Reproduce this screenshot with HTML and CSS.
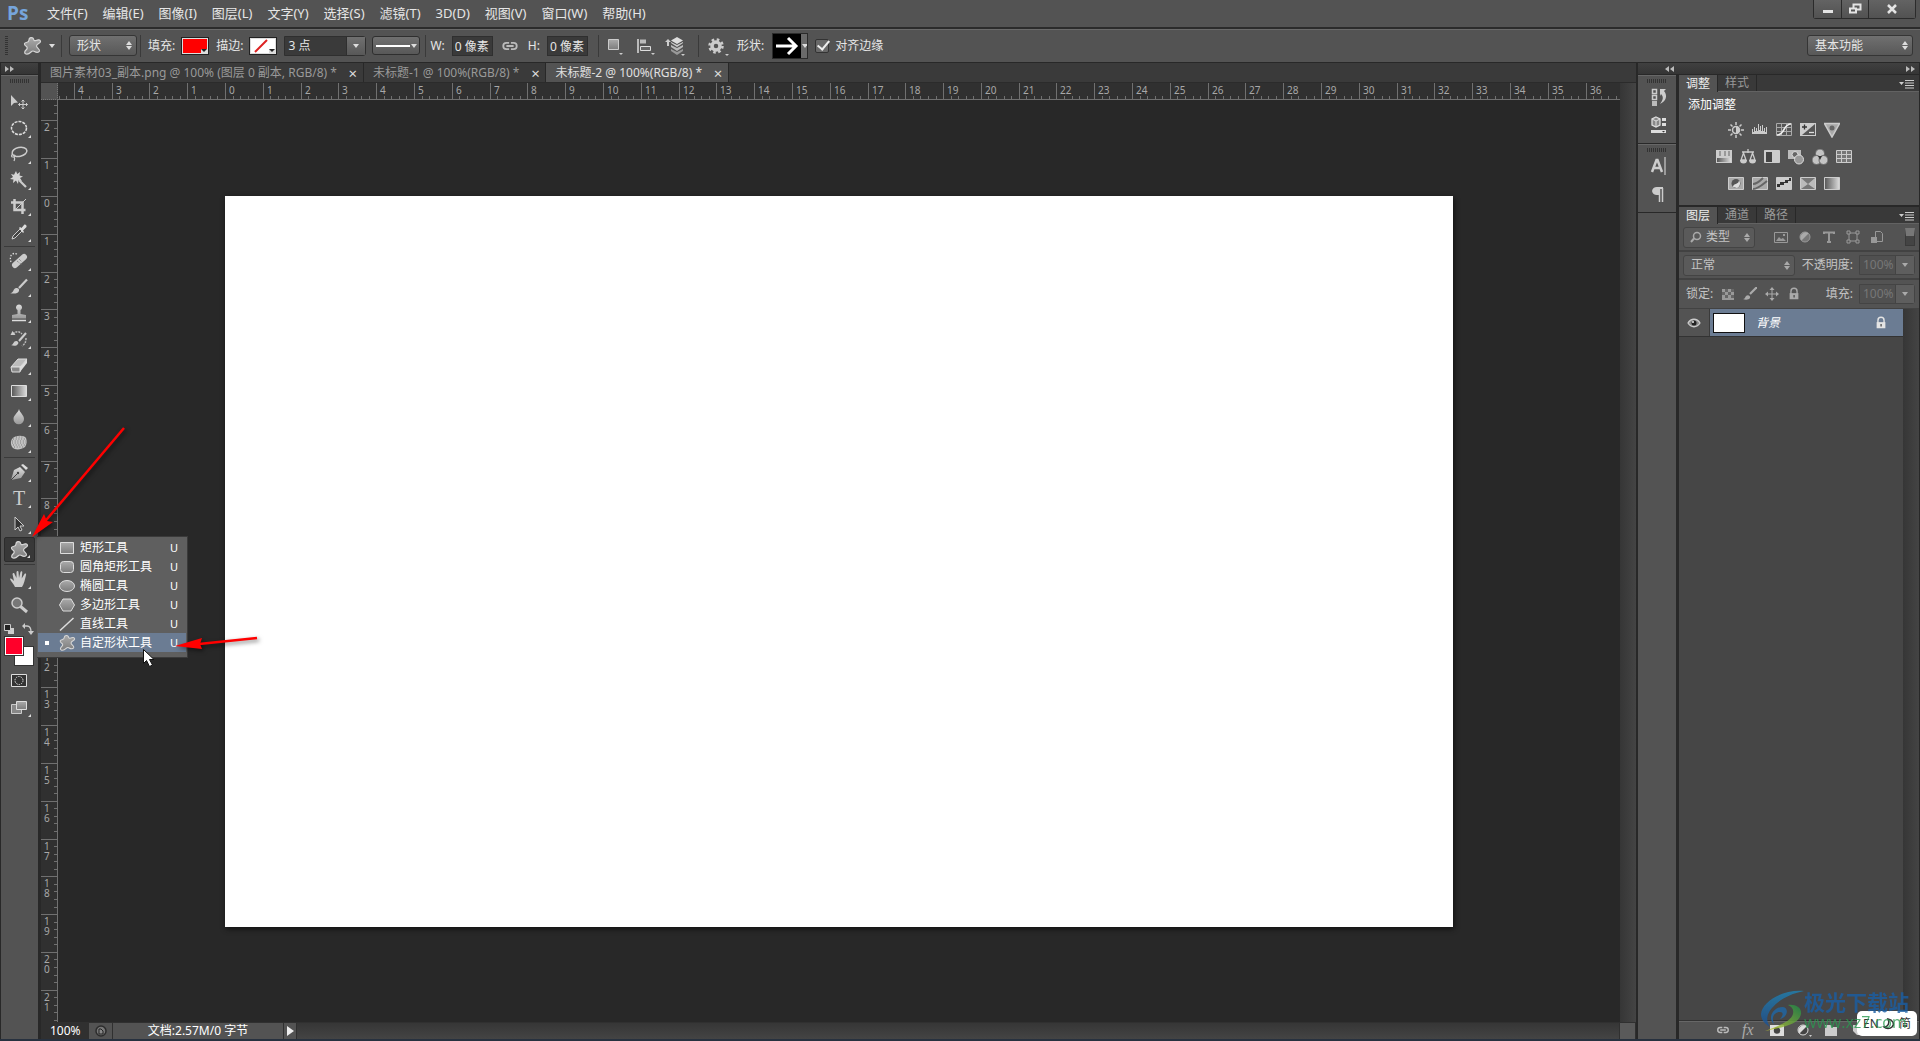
FILE: index.html
```html
<!DOCTYPE html>
<html lang="zh-CN">
<head>
<meta charset="utf-8">
<title>Ps</title>
<link rel="stylesheet" href="styles.css">
</head>
<body>
<svg class="defs" aria-hidden="true">
  <defs>
    <linearGradient id="g-face" x1="0" y1="0" x2="0" y2="1"><stop offset="0" stop-color="#ddd"/><stop offset="1" stop-color="#999"/></linearGradient>
    <linearGradient id="g-gray" x1="0" y1="0" x2="0" y2="1"><stop offset="0" stop-color="#aaa"/><stop offset="1" stop-color="#7c7c7c"/></linearGradient>
    <linearGradient id="g-side" x1="0" y1="0" x2="1" y2="0"><stop offset="0" stop-color="#555"/><stop offset="1" stop-color="#ddd"/></linearGradient>
    <symbol id="i-blob" viewBox="0 0 20 20"><path d="M7 4c0-3 4-3 4.500-1 .3 1.500 1 2 2.500 1.500 2-1 4.500-1 4.500 1 0 2-4 2-4 4.500 0 2 3.500 3 3 5-1 2-3.500 1.500-5 .5-1.500-1-2.500-.5-3.500.5-1.500 1.500-3 2.500-5 2-2-.7-1.500-2.500 0-4 1.500-1.300 1.500-2.500.5-3.500-1.500-1-2.500-1.500-2-3C3.500 6 7 7 7 4z" fill="url(#g-gray)" stroke="#d6d6d6" stroke-width="1.200"/></symbol>
    <symbol id="i-link" viewBox="0 0 20 20"><path d="M9 6.500H6a3.500 3.500 0 0 0 0 7h3M11 6.500h3a3.500 3.500 0 0 1 0 7h-3M6 10h8" fill="none" stroke="#bbb" stroke-width="2"/></symbol>
    <symbol id="i-menu" viewBox="0 0 16 10"><path d="M0 3h5L2.500 6zM6 1h9v1H6zM6 3.500h9v1H6zM6 6h9v1H6zM6 8.500h9v1H6z" fill="#ccc"/></symbol>
    <symbol id="i-lock" viewBox="0 0 16 16"><path d="M4.500 8V5a3.500 3.500 0 0 1 7 0v3" fill="none" stroke="currentColor" stroke-width="1.600"/><path d="M3 7h10v7H3z" fill="currentColor"/><path d="M7.400 9h1.400v3H7.400z" fill="#444"/></symbol>
  </defs>
</svg>

<header class="menubar">
  <span class="logo">Ps</span>
  <nav class="menus">
    <a href="#">文件(F)</a><a href="#">编辑(E)</a><a href="#">图像(I)</a><a href="#">图层(L)</a><a href="#">文字(Y)</a><a href="#">选择(S)</a><a href="#">滤镜(T)</a><a href="#">3D(D)</a><a href="#">视图(V)</a><a href="#">窗口(W)</a><a href="#">帮助(H)</a>
  </nav>
  <div class="winbtns">
    <button aria-label="最小化"><svg width="12" height="12"><path d="M1 7h10v3H1z" fill="#e4e4e4"/></svg></button>
    <button aria-label="还原"><svg width="14" height="12"><path d="M5.500 1.500h7v5h-7z" fill="none" stroke="#e4e4e4" stroke-width="2"/><path d="M2 5.500h6v4H2z" fill="#555" stroke="#e4e4e4" stroke-width="2"/></svg></button>
    <button class="close" aria-label="关闭"><svg width="12" height="10"><path d="M2 1l8 8M10 1L2 9" stroke="#e4e4e4" stroke-width="2.500"/></svg></button>
  </div>
</header>

<div class="options">
  <span class="vgrip"></span>
  <button class="plain preset" aria-label="自定形状"><svg width="20" height="20"><use href="#i-blob"/></svg><i class="caret"></i></button>
  <i class="vsep"></i>
  <span class="sel mode"><select aria-label="模式"><option>形状</option></select></span>
  <i class="vsep"></i>
  <span class="lab">填充:</span><button class="swatch red" aria-label="填充颜色"></button>
  <span class="lab">描边:</span><button class="swatch none" aria-label="描边颜色"><svg width="24" height="15"><path d="M5 14L17 2" stroke="#d22" stroke-width="2"/></svg></button>
  <span class="combo stroke"><input aria-label="描边宽度" value="3 点"><button aria-label="选择宽度"><i class="caret"></i></button></span>
  <button class="linetype" aria-label="线型"><i class="rule"></i><i class="caret"></i></button>
  <i class="vsep tight"></i>
  <label class="num">W:<input value="0 像素"></label>
  <button class="plain" aria-label="链接"><svg width="18" height="18"><use href="#i-link"/></svg></button>
  <label class="num">H:<input value="0 像素"></label>
  <i class="vsep late"></i>
  <button class="plain op" aria-label="路径操作"><svg width="22" height="22"><path d="M4.500 4.500h10v10h-10z" fill="url(#g-gray)" stroke="#ccc"/><path d="M15 18h4l-2 2z" fill="#ccc"/></svg></button>
  <button class="plain op" aria-label="路径对齐"><svg width="22" height="22"><path d="M4 4v14" stroke="#ddd" stroke-width="1.500"/><path d="M6 4.500h6v4H6z" fill="#bbb"/><path d="M6.500 11.500h10v4h-10z" fill="#666" stroke="#ddd"/><path d="M17 18h4l-2 2z" fill="#ccc"/></svg></button>
  <button class="plain op" aria-label="路径排列"><svg width="22" height="22"><path d="M1 7l3-3 3 3H5v4H3V7z" fill="#ccc"/><path d="M7 14l6 3 6-3v2l-6 4-6-4z" fill="#999"/><path d="M7 10l6 3 6-3v2l-6 4-6-4z" fill="#bbb"/><path d="M13 2l6 3.500-6 3.500-6-3.500z" fill="#ddd"/><path d="M7 7l6 3 6-3v1l-6 4-6-4zM17 19h4l-2 2z" fill="#ccc"/></svg></button>
  <i class="vsep wide"></i>
  <button class="plain gear" aria-label="设置"><svg width="22" height="22"><circle cx="9" cy="11" r="6.500" fill="none" stroke="#ccc" stroke-width="2.500" stroke-dasharray="2.550 2.550"/><circle cx="9" cy="11" r="4" fill="none" stroke="#ccc" stroke-width="3.500"/><path d="M18 19h4l-2 2z" fill="#ccc"/></svg></button>
  <span class="lab">形状:</span>
  <button class="shape" aria-label="形状"><svg width="28" height="24"><path d="M0 0h28v24H0z" fill="#000"/><path d="M3 12h19M15 4l8 8-8 8" fill="none" stroke="#fff" stroke-width="3"/></svg><i class="caret"></i></button>
  <label class="check"><input type="checkbox" checked>对齐边缘</label>
  <span class="sel workspace"><select aria-label="工作区"><option>基本功能</option></select></span>
</div>

<main class="work">
  <aside class="tools">
    <div class="strip left"><svg width="10" height="8"><path d="M0 1l4 3-4 3zM5 1l4 3-4 3z" fill="#bbb"/></svg></div>
    <div class="toolbox">
      <i class="grip"></i>
      <div class="group">
        <button class="tool solo" aria-label="移动"><svg viewBox="0 0 20 20"><path d="M2 3v11l3-3 4-.5z" fill="#ccc"/><path d="M14 8v9M9.500 12.500h9M12.500 9.500L14 8l1.500 1.500M12.500 15.500L14 17l1.500-1.500M11 11l-1.500 1.500L11 14M17 11l1.500 1.500L17 14" fill="none" stroke="#ccc"/></svg></button>
        <button class="tool" aria-label="椭圆选框"><svg viewBox="0 0 20 20"><ellipse cx="10" cy="10" rx="7.500" ry="6.500" fill="none" stroke="#ddd" stroke-width="1.500" stroke-dasharray="3 1"/></svg></button>
        <button class="tool" aria-label="套索"><svg viewBox="0 0 20 20"><ellipse cx="10.500" cy="8" rx="7.500" ry="4.500" transform="rotate(-12 10 8)" fill="none" stroke="#ccc" stroke-width="1.500"/><path d="M4 10c-2 1-2 3 0 3s3-2 1-2M5 13c1 1 1 2 0 4" fill="none" stroke="#ccc" stroke-width="1.200"/></svg></button>
        <button class="tool" aria-label="魔棒"><svg viewBox="0 0 20 20"><path d="M10 10l7 7" stroke="#ccc" stroke-width="2.200"/><path d="M7 1l1.200 3L11 2l-.5 3.500L14 6.500 11 8l2 3-3.500-1L9 14 7 10.500 4 13l.5-3.500L1 9l3-2-2-3 3 .8z" fill="#d4d4d4"/></svg></button>
        <button class="tool" aria-label="裁剪"><svg viewBox="0 0 20 20"><path d="M5.500 3v11h11M2 6.500h11.500V18" fill="none" stroke="#ccc" stroke-width="2.500"/><path d="M6 14L17 3" stroke="#ccc"/></svg></button>
        <button class="tool" aria-label="吸管"><svg viewBox="0 0 20 20"><path d="M3 17l1-3 7-7 2 2-7 7z" fill="#444" stroke="#ccc"/><path d="M10 6l1-1 1.500 1L15 3c1-1 3 0 2.500 2L14 8.500l1 1.500-1 1z" fill="#ddd"/></svg></button>
      </div>
      <i class="hsep"></i>
      <div class="group">
        <button class="tool" aria-label="修复画笔"><svg viewBox="0 0 20 20"><path d="M8 3C3 1 0 5 2 11" fill="none" stroke="#ddd" stroke-dasharray="1.500 1.500" stroke-width="1.300"/><path d="M6 14L15 6" stroke="#ccc" stroke-width="6" stroke-linecap="round"/><path d="M8 10l5 4M10 8l4 4" stroke="#777" stroke-dasharray="1 1"/></svg></button>
        <button class="tool" aria-label="画笔"><svg viewBox="0 0 20 20"><path d="M18 2.500L10 11" stroke="#ccc" stroke-width="2.200"/><path d="M1 16c3 0 3-2 4-3.500C7 10 11 11 10 14c-1 3-6 3-9 2z" fill="#ccc"/></svg></button>
        <button class="tool" aria-label="仿制图章"><svg viewBox="0 0 20 20"><path d="M3 15.500v-3.500l5.500-1V7a3 3 0 1 1 3 0v4l5.500 1v3.500z" fill="url(#g-face)"/><path d="M3 17.500h14" stroke="#ddd" stroke-width="1.500"/></svg></button>
        <button class="tool" aria-label="历史画笔"><svg viewBox="0 0 20 20"><path d="M17 4l-7 8" stroke="#ccc" stroke-width="2"/><path d="M2 16c2 0 2-2 3.500-3.500s5 0 3.500 2.500-5 2-7 1z" fill="#ccc"/><path d="M4 5c3-3 6-3 9 0M17 9c0 4-1 6-4 8" fill="none" stroke="#bbb" stroke-width="1.500" stroke-dasharray="2 1"/><path d="M1.500 6l2-4 3 4z" fill="#ccc"/></svg></button>
        <button class="tool" aria-label="橡皮擦"><svg viewBox="0 0 20 20"><path d="M2 12L9 4h9l-7 8z" fill="#bbb" stroke="#ddd"/><path d="M2 12h9v5H3z" fill="#888" stroke="#ddd"/><path d="M11 12l7-8v4l-7 9z" fill="#ddd"/></svg></button>
        <button class="tool" aria-label="渐变"><svg viewBox="0 0 20 20"><path d="M2.500 4.500h15v11h-15z" fill="url(#g-side)" stroke="#ddd"/></svg></button>
        <button class="tool" aria-label="模糊"><svg viewBox="0 0 20 20"><path d="M10 2c1 4 5 6 5 10a5.200 5.200 0 0 1-10.500 0C4.500 8 9 6 10 2z" fill="url(#g-face)"/></svg></button>
        <button class="tool" aria-label="海绵"><svg viewBox="0 0 20 20"><path d="M3 6c3-4 12-4 14-1 1 3 1 6-1 9-4 3-10 3-12 1-2-2-3-6-1-9z" fill="#c4c4c4"/><path d="M4 6h12M3 8h14M3 10h14M4 12h12M5 14h10M7 4h8" stroke="#777" stroke-dasharray="1 1.700"/></svg></button>
      </div>
      <i class="hsep"></i>
      <div class="group">
        <button class="tool" aria-label="钢笔"><svg viewBox="0 0 20 20"><path d="M2 18L5 8l6-3 5 5-4 6z" fill="url(#g-face)"/><path d="M12 3l5 5 2-2-5-4z" fill="#ddd"/><path d="M2 18l6-6" stroke="#444"/><circle cx="9" cy="11" r="1.200" fill="#444"/></svg></button>
        <button class="tool type" aria-label="文字">T</button>
        <button class="tool" aria-label="路径选择"><svg viewBox="0 0 20 20"><path d="M6 3v13l3-3 2 4 2-1-2-4h4z" fill="#333" stroke="#ccc"/></svg></button>
        <div class="toolwrap">
          <button class="tool on" aria-label="自定形状工具"><svg viewBox="0 0 20 20"><use href="#i-blob"/></svg></button>
          <ul class="flyout">
            <li><svg width="18" height="14"><path d="M2.500 1.500h13v11h-13z" fill="url(#g-gray)" stroke="#ddd"/></svg><span>矩形工具</span><kbd>U</kbd></li>
            <li><svg width="18" height="14"><rect x="2.500" y="1.500" width="13" height="11" rx="3" fill="url(#g-gray)" stroke="#ddd"/></svg><span>圆角矩形工具</span><kbd>U</kbd></li>
            <li><svg width="18" height="14"><ellipse cx="9" cy="7" rx="7.500" ry="5.500" fill="url(#g-gray)" stroke="#ddd"/></svg><span>椭圆工具</span><kbd>U</kbd></li>
            <li><svg width="18" height="14"><path d="M5 1h8l3.500 6L13 13H5L1.500 7z" fill="url(#g-gray)" stroke="#ddd"/></svg><span>多边形工具</span><kbd>U</kbd></li>
            <li><svg width="18" height="14"><path d="M2 13.500L15.500 1" stroke="#ddd" stroke-width="1.500"/></svg><span>直线工具</span><kbd>U</kbd></li>
            <li class="cur"><svg width="18" height="18"><use href="#i-blob"/></svg><span>自定形状工具</span><kbd>U</kbd></li>
          </ul>
        </div>
      </div>
      <i class="hsep"></i>
      <div class="group">
        <button class="tool" aria-label="抓手"><svg viewBox="0 0 20 20"><path d="M6 18c-1-3-4-5-5-8 1-1 2 0 4 2L3.500 5c.5-1.500 2-1 2 0L7.500 9V3c.3-1.500 2-1.500 2 0L10 9l1.500-6c.5-1.300 2-1 1.800.3L12.700 9.500 15.500 5c1-1 2 0 1.500 1-1 4-2 9-4 12z" fill="#ccc"/></svg></button>
        <button class="tool solo" aria-label="缩放"><svg viewBox="0 0 20 20"><path d="M11 11l7 6" stroke="#ccc" stroke-width="3"/><circle cx="8" cy="8" r="5" fill="#777" stroke="#ccc" stroke-width="1.500"/></svg></button>
      </div>
      <div class="mini">
        <button class="plain" aria-label="默认颜色"><svg width="10" height="10"><path d="M4 4h6v6H4z" fill="#ccc"/><path d="M.5.500h6v6h-6z" fill="#222" stroke="#ccc"/></svg></button>
        <button class="plain" aria-label="切换颜色"><svg width="12" height="12"><path d="M2 3h3c3 0 4 2 4 6" fill="none" stroke="#ccc" stroke-width="1.300"/><path d="M0 3l3-3v6zM6 8h6l-3 4z" fill="#ccc"/></svg></button>
      </div>
      <div class="colors"><button class="bg" aria-label="背景色"></button><button class="fg" aria-label="前景色"></button></div>
      <button class="tool solo mask" aria-label="快速蒙版"><svg viewBox="0 0 20 20"><path d="M2.500 4.500h15v12h-15z" fill="#333" stroke="#ddd"/><circle cx="10" cy="10.500" r="4" fill="none" stroke="#ddd" stroke-dasharray="1.500 1"/></svg></button>
      <button class="tool screen" aria-label="屏幕模式"><svg viewBox="0 0 20 20"><path d="M2.500 7.500h10v9h-10z" fill="#888" stroke="#ccc"/><path d="M7.500 4.500h10v8h-10z" fill="url(#g-gray)" stroke="#ddd"/></svg></button>
    </div>
  </aside>

  <section class="doc">
    <div class="tabs">
      <div class="tab">图片素材03_副本.png @ 100% (图层 0 副本, RGB/8) *<button aria-label="关闭">×</button></div>
      <div class="tab">未标题-1 @ 100%(RGB/8) *<button aria-label="关闭">×</button></div>
      <div class="tab active">未标题-2 @ 100%(RGB/8) *<button aria-label="关闭">×</button></div>
    </div>
    <div class="view">
      <div class="corner"></div>
      <svg class="ruler hr" id="ruler-h"></svg>
      <div class="vscroll"></div>
      <svg class="ruler vr" id="ruler-v"></svg>
      <div class="canvas"><div class="page"></div></div>
    </div>
    <footer class="status">
      <input class="zoom" aria-label="缩放比例" value="100%">
      <button class="share" aria-label="共享"><svg width="12" height="12"><circle cx="6" cy="6" r="5" fill="#777" stroke="#2c2c2c" stroke-width="1.500"/><path d="M4 9V4h2l2 2v3z" fill="#888" stroke="#222"/></svg></button>
      <span class="info">文档:2.57M/0 字节</span>
      <button class="play" aria-label="显示菜单"><svg width="7" height="10"><path d="M0 0l7 5-7 5z" fill="#eee"/></svg></button>
      <span class="hscroll"></span>
      <span class="sizer"></span>
    </footer>
  </section>

  <aside class="dock">
    <div class="strip"></div>
    <div class="dockbox">
      <i class="grip"></i>
      <button class="dk" aria-label="历史记录"><svg width="18" height="20"><path d="M2.500 2.500h4v4h-4zM2.500 8.500h4v4h-4z" fill="none" stroke="#ccc" stroke-width="1.500"/><path d="M2 14h5v5H2z" fill="#bbb"/><path d="M10 2h6l-2 2c4 5 2 10-4 13 3-4 4-7 1-10L10 9z" fill="#ccc"/></svg></button>
      <button class="dk" aria-label="属性"><svg width="18" height="20"><path d="M6 2l4 2v6l-4 2-4-2V4z" fill="#888" stroke="#ddd" stroke-width="1.300"/><path d="M2 4l4 2 4-2M6 6v6" stroke="#ddd" fill="none"/><path d="M12 3h4v3h-4zM12 8h4v3h-4zM1 15h15v3H1z" fill="#ddd"/><path d="M12 16h3l-1.500 1.500z" fill="#333"/></svg></button>
    </div>
    <div class="dockbox">
      <i class="grip"></i>
      <button class="dk" aria-label="字符"><svg width="18" height="20"><path d="M2 16L6.500 4h1L12 16M4 12h6" fill="none" stroke="#ccc" stroke-width="2.500"/><path d="M15 1v18" stroke="#ccc" stroke-width="1.200"/></svg></button>
      <button class="dk" aria-label="段落"><svg width="18" height="20"><path d="M2 7a5 5 0 0 1 5-4h6v2H9v6H7a5 5 0 0 1-5-4z" fill="#ccc"/><path d="M9.500 4v14M12.500 4v14" stroke="#ccc" stroke-width="1.500"/></svg></button>
    </div>
    <div class="dockrest"></div>
  </aside>

  <aside class="panels">
    <div class="strip ends"><svg width="10" height="8"><path d="M4 1L0 4l4 3zM9 1L5 4l4 3z" fill="#bbb"/></svg><svg width="10" height="8"><path d="M0 1l4 3-4 3zM5 1l4 3-4 3z" fill="#bbb"/></svg></div>
    <section class="panel adjust">
      <div class="ptabs"><button class="active">调整</button><button>样式</button><span class="pm"><svg width="16" height="10"><use href="#i-menu"/></svg></span></div>
      <div class="abody">
        <p>添加调整</p>
        <div class="arow">
          <svg viewBox="0 0 16 16"><circle cx="8" cy="8" r="3.500" fill="#555" stroke="#ccc" stroke-width="1.500"/><path d="M8 4.500a3.500 3.500 0 0 1 0 7z" fill="#ccc"/><path d="M8 0v3M8 13v3M0 8h3M13 8h3M2.500 2.500l2 2M11.500 11.500l2 2M13.500 2.500l-2 2M4.500 11.500l-2 2" stroke="#ccc" stroke-width="1.500"/></svg>
          <svg viewBox="0 0 16 16"><path d="M0 12V7h1v3h1V5h1v4h1V6h1v3h1V2h1v6h1V4h1v5h1V3h1v6h1V6h1v4h1V5h1v7z" fill="#ccc"/></svg>
          <svg viewBox="0 0 16 16"><path d="M.5 1.500h15v12H.5zM.5 5.500h15M.5 9.500h15M5.500 2v12M10.500 2v12" fill="#555" stroke="#aaa"/><path d="M1 13C9 13 7 2 15 2" fill="none" stroke="#eee" stroke-width="1.600"/></svg>
          <svg viewBox="0 0 16 16"><path d="M0 1h16v13H0z" fill="#ccc"/><path d="M2 13L15 2v11z" fill="#555"/><path d="M2 5h5M4.500 2.500v5" stroke="#333" stroke-width="1.300"/><path d="M9 10.500h5" stroke="#ddd" stroke-width="1.300"/></svg>
          <svg viewBox="0 0 16 16"><path d="M.5 1.500h15L8 15z" fill="#aaa" stroke="#ccc" stroke-width="1.500"/><circle cx="8" cy="6" r="2.500" fill="#666"/></svg>
        </div>
        <div class="arow">
          <svg viewBox="0 0 16 16"><path d="M0 1h16v13H0z" fill="#ccc"/><path d="M1 9h14v4H1z" fill="url(#g-side)"/><path d="M3 2h2v5H3zM8 2h2v5H8zM12 2h2v5h-2z" fill="#999"/></svg>
          <svg viewBox="0 0 16 16"><path d="M8 0v4M2 3h12M3.500 4L1 11h5zM12.500 4L10 11h5z" fill="none" stroke="#ccc" stroke-width="1.300"/><path d="M0 11h7a3.500 3.500 0 0 1-7 0zM9 11h7a3.500 3.500 0 0 1-7 0z" fill="#ccc"/></svg>
          <svg viewBox="0 0 16 16"><path d="M.5 1.500h15v12H.5z" fill="#ccc" stroke="#ccc"/><path d="M2 3h6v10H2z" fill="#444"/></svg>
          <svg viewBox="0 0 16 16"><path d="M0 1h13v9H0z" fill="#bbb"/><circle cx="7" cy="5.500" r="3" fill="#666" stroke="#ddd"/><circle cx="11" cy="10.500" r="4.500" fill="#999" stroke="#ddd"/></svg>
          <svg viewBox="0 0 16 16"><g fill="#c4c4c4" stroke="#666"><circle cx="8" cy="4.500" r="4.500"/><circle cx="4.500" cy="11" r="4.500"/><circle cx="11.500" cy="11" r="4.500"/></g><path d="M6 7h4l-2 4z" fill="#333"/></svg>
          <svg viewBox="0 0 16 16"><path d="M.5 1.500h15v12H.5zM.5 5.500h15M.5 9.500h15M5.500 2v12M10.500 2v12" fill="#777" stroke="#ccc"/></svg>
        </div>
        <div class="arow">
          <svg viewBox="0 0 16 16"><path d="M.5 1.500h15v12H.5z" fill="#aaa" stroke="#ccc"/><circle cx="8" cy="7.500" r="4.500" fill="#555"/><path d="M5 11c0-4 6-2 6-7 2 3 1 7-2 8z" fill="#ddd"/></svg>
          <svg viewBox="0 0 16 16"><path d="M.5 1.500h15v12H.5z" fill="#aaa" stroke="#ccc"/><path d="M1 8c4 0 7-3 10-6M1 13c5 0 9-4 14-8" stroke="#666" stroke-width="2" fill="none"/></svg>
          <svg viewBox="0 0 16 16"><path d="M.5 1.500h15v12H.5z" fill="#ccc" stroke="#ccc"/><path d="M1 8h3V6h5V4h4V2h2v3h-3v2H8v2H4v2H1z" fill="#333"/></svg>
          <svg viewBox="0 0 16 16"><path d="M.5 1.500h15v12H.5z" fill="#777" stroke="#ccc"/><path d="M1 2l7 6-7 5zM15 2L8 8l7 5z" fill="#bbb"/></svg>
          <svg viewBox="0 0 16 16"><path d="M.5 1.500h15v12H.5z" fill="url(#g-side)" stroke="#ccc"/></svg>
        </div>
      </div>
    </section>
    <section class="panel layers">
      <div class="ptabs"><button class="active">图层</button><button>通道</button><button>路径</button><span class="pm"><svg width="16" height="10"><use href="#i-menu"/></svg></span></div>
      <div class="lrow filter">
        <span class="sel kind dim"><svg width="12" height="12"><circle cx="7" cy="5" r="3.500" fill="none" stroke="#aaa" stroke-width="1.500"/><path d="M4 7.500L1 11" stroke="#aaa" stroke-width="2"/></svg><select aria-label="过滤类型"><option>类型</option></select></span>
        <span class="ficons">
          <svg viewBox="0 0 14 14"><path d="M.5 2.500h13v10H.5z" fill="#555" stroke="#999"/><path d="M2 11l3-4 2 2 2-1 3 3z" fill="#999"/><path d="M9 4h2v2H9z" fill="#999"/></svg>
          <svg viewBox="0 0 14 14"><circle cx="7" cy="7" r="5" fill="#777" stroke="#999"/><path d="M3.500 10.500a5 5 0 0 1 7-7z" fill="#aaa"/></svg>
          <svg viewBox="0 0 14 14"><path d="M2 4V2.500h10V4M7 2.500v9M5 12h4" fill="none" stroke="#999" stroke-width="2"/></svg>
          <svg viewBox="0 0 14 14"><path d="M3 3h8v8H3z" fill="none" stroke="#999"/><path d="M1 1h3v3H1zM10 1h3v3h-3zM1 10h3v3H1zM10 10h3v3h-3z" fill="#555" stroke="#999"/></svg>
          <svg viewBox="0 0 14 14"><path d="M5.500 1.500h5l2 2v8h-7z" fill="#555" stroke="#999"/><path d="M1 7h6v6H1z" fill="#999"/></svg>
        </span>
        <span class="toggle"></span>
      </div>
      <div class="lrow">
        <span class="sel blend dim"><select aria-label="混合模式"><option>正常</option></select></span>
        <label class="pct">不透明度:<span class="combo dim"><input value="100%" disabled><button aria-label="不透明度"><i class="caret"></i></button></span></label>
      </div>
      <div class="lrow">
        <span class="locks">锁定:
          <svg viewBox="0 0 14 14"><path d="M1 2h12v11H1z" fill="#999"/><path d="M4 2h3v3H4zM10 2h3v3h-3zM1 5h3v3H1zM7 5h3v3H7zM4 8h3v3H4zM10 8h3v3h-3z" fill="#666"/></svg>
          <svg viewBox="0 0 14 14"><path d="M14 0L7 7" stroke="#aaa" stroke-width="2.200"/><path d="M0 12c2 0 2-2 3-3 2-2 5 0 4 2-1 2-5 2-7 1z" fill="#aaa"/></svg>
          <svg viewBox="0 0 14 14"><path d="M7 2v10M2 7h10" stroke="#aaa"/><path d="M7 0l2.500 3h-5zM7 14l2.500-3h-5zM0 7l3-2.500v5zM14 7l-3-2.500v5z" fill="#aaa"/></svg>
          <svg class="lk"><use href="#i-lock"/></svg>
        </span>
        <label class="pct">填充:<span class="combo dim"><input value="100%" disabled><button aria-label="填充"><i class="caret"></i></button></span></label>
      </div>
      <div class="list">
        <div class="rows">
          <div class="layer">
            <button class="eye" aria-label="可见性"><svg width="14" height="12"><path d="M1 6c3-5 9-5 12 0-3 5-9 5-12 0z" fill="#888" stroke="#ccc" stroke-width="1.300"/><circle cx="7" cy="6" r="2.500" fill="#222"/><circle cx="6" cy="5" r="1" fill="#eee"/></svg></button>
            <div class="lname"><i class="thumb"></i><em>背景</em><svg class="lk2" width="14" height="14"><use href="#i-lock"/></svg></div>
          </div>
        </div>
        <div class="vscroll"></div>
      </div>
      <footer class="pfoot">
        <button class="plain" aria-label="链接图层"><svg width="16" height="14"><use href="#i-link"/></svg></button>
        <button class="plain fx" aria-label="图层样式">fx</button>
        <button class="plain" aria-label="蒙版"><svg width="16" height="14"><path d="M1 2h14v11H1z" fill="#ddd"/><circle cx="8" cy="7.500" r="3.200" fill="#444"/></svg></button>
        <button class="plain" aria-label="调整图层"><svg width="16" height="14"><circle cx="7" cy="7" r="5" fill="#444" stroke="#ddd"/><path d="M3.500 10.500a5 5 0 0 1 7-7z" fill="#ddd"/><path d="M13 12h3l-1.500 2z" fill="#ccc"/></svg></button>
        <button class="plain" aria-label="新建组"><svg width="16" height="14"><path d="M2 2h6l1 2h5v9H2z" fill="#ccc"/></svg></button>
        <button class="plain" aria-label="新建图层"><svg width="16" height="14"><path d="M3 2h10v10H7L3 8z" fill="#ccc"/></svg></button>
      </footer>
    </section>
  </aside>
</main>

<div class="ime"><span>EN</span><svg width="14" height="14"><path d="M6 2c5 1 7 5 4 8-2 2-6 2-8 0 4 0 6-4 4-8z" fill="none" stroke="#333" stroke-width="1.500"/></svg><span>简</span></div>
<div class="mark">
  <svg width="44" height="44" viewBox="0 0 44 44">
    <defs><linearGradient id="g-sw" x1="0" y1="0" x2="0" y2="1"><stop offset="0" stop-color="#2083b5"/><stop offset="1" stop-color="#1a4f94"/></linearGradient><linearGradient id="g-sg" x1="1" y1="0" x2="0" y2="1"><stop offset="0" stop-color="#1c8a48"/><stop offset="1" stop-color="#c5c82c"/></linearGradient></defs>
    <path d="M44 1C24-1 2 11 1 24c0 6 4 10 9 13-4-6-4-12 2-19C20 9 30 4 44 1z" fill="url(#g-sw)"/>
    <path d="M14 34c-7-6-1-17 9-17 6 1 5 10-3 12 3-3 4-7 0-7-6 0-9 6-6 12z" fill="#1f68a8"/>
    <path d="M28 15c8-1 14 3 13 9-2 10-16 13-36 17 10-4 26-9 28-17 1-5-1-7-5-9z" fill="url(#g-sg)"/>
  </svg>
  <div><b>极光下载站</b><span>www.xz7.com</span></div>
</div>

<svg class="notes" width="270" height="680" aria-hidden="true">
  <g class="arrow" stroke="#f00" fill="#f00">
    <path d="M124 428L42 525" stroke-width="2.500"/><path d="M32 537l12-23 3 7 6 1z" stroke="none"/>
    <path d="M257 638l-58 6" stroke-width="2.500"/><path d="M175 646l27-8-2 6 2 5z" stroke="none"/>
  </g>
  <path d="M143.500 649.500v14l3-3 3 6 3-1.500-3-5.500h4.500z" fill="#fff" stroke="#111"/>
</svg>
<script src="ruler.js"></script>
</body>
</html>
```
FILE: styles.css
```css
* { box-sizing: border-box; }
body {
  margin: 0; height: 100vh; display: flex; flex-direction: column; overflow: hidden;
  background: #535353; color: #e6e6e6;
  font: 12px/16px "Noto Sans", "Noto Sans CJK SC", sans-serif;
}
button, input, select { font: inherit; color: inherit; margin: 0; padding: 0; border: 0; background: none; border-radius: 0; }
svg { display: block; flex: none; }
.defs { position: absolute; width: 0; height: 0; }
a { color: inherit; text-decoration: none; }
.plain { display: flex; align-items: center; }
.caret { border: 3px solid transparent; border-top: 4px solid #ddd; border-bottom: 0; width: 0; height: 0; flex: none; }

/* menu bar */
.menubar { display: flex; align-items: center; height: 29px; flex: none; border-bottom: 2px solid #2b2b2b; padding-left: 7px; }
.logo { font: bold 19px/26px "Open Sans", sans-serif; color: #76a5dc; width: 32px; padding-bottom: 2px; }
.menus { display: flex; font-size: 13px; line-height: 24px; padding-bottom: 2px; }
.menus a { padding: 0 7px 0 8px; white-space: nowrap; }
.winbtns { margin: 0 4px 0 auto; display: flex; align-self: flex-start; border: 1px solid #2b2b2b; border-top: 0; border-radius: 0 0 3px 3px; }
.winbtns button { width: 27px; height: 18px; display: flex; align-items: center; justify-content: center; background: linear-gradient(#636363, #525252); }
.winbtns button + button { border-left: 1px solid #2b2b2b; }
.winbtns .close { width: 47px; }

/* options bar */
.options { display: flex; align-items: center; height: 33px; flex: none; border-top: 1px solid #6a6a6a; padding: 0 7px 1px 5px; white-space: nowrap; }
.vgrip { width: 3px; height: 20px; background: repeating-linear-gradient(#333 0 1px, transparent 1px 2px); margin-right: 14px; }
.preset { gap: 7px; width: 36px; }
.vsep { width: 1px; height: 22px; background: #3a3a3a; margin: 0 7px 0 3px; flex: none; }
.tight { margin-right: 4px; }
.late { margin: 0 5px 0 10px; }
.wide { margin: 0 8px 0 4px; }
.sel { position: relative; display: flex; align-items: center; height: 21px; border: 1px solid #353535; border-radius: 3px; background: linear-gradient(#707070, #585858); }
.sel select { appearance: none; width: 100%; height: 19px; padding-left: 7px; outline: 0; }
.sel::before, .sel::after { content: ""; position: absolute; right: 4px; border: 3px solid transparent; }
.sel::before { top: 2px; border-bottom: 4px solid #ddd; }
.sel::after { bottom: 2px; border-top: 4px solid #ddd; }
.mode { width: 68px; }
.lab { margin-right: 6px; }
.swatch { width: 28px; height: 18px; border: 1px solid #222; margin-right: 7px; box-shadow: inset 0 0 0 1px #ddd; position: relative; background: #fff; }
.swatch::after { content: ""; position: absolute; right: 1px; bottom: 1px; border: 3px solid #ddd; border-top: 3px solid #222; border-bottom: 1px solid #ddd; }
.red { background: #f00; }
.combo { display: flex; height: 20px; border: 1px solid #2f2f2f; border-radius: 0 3px 3px 0; }
.combo input { background: #3a3a3a; padding-left: 3px; width: 100%; min-width: 0; }
.combo button { width: 19px; flex: none; background: linear-gradient(#707070, #585858); border-left: 1px solid #2f2f2f; display: flex; align-items: center; justify-content: center; }
.stroke { width: 82px; margin-right: 6px; }
.linetype { width: 48px; height: 19px; border: 1px solid #2f2f2f; border-radius: 3px; background: linear-gradient(#707070, #585858); display: flex; align-items: center; gap: 1px; padding-left: 3px; margin-right: 2px; }
.rule { width: 34px; height: 2px; background: #fff; }
.num { display: flex; align-items: center; gap: 7px; }
.num input { width: 41px; height: 20px; background: #3a3a3a; border: 1px solid #2f2f2f; padding-left: 2px; }
.num + .plain { margin: 0 9px 0 8px; }
.op { margin-right: 8px; }
.gear { margin-right: 8px; }
.shape { display: flex; align-items: center; width: 36px; height: 26px; border: 1px solid #2b2b2b; gap: 1px; background: #6a6a6a; overflow: hidden; margin: 0 7px 0 2px; }
.check { display: flex; align-items: center; gap: 6px; }
.check input { appearance: none; width: 14px; height: 14px; border: 1px solid #333; border-radius: 2px; background: #686868; position: relative; }
.check input::after { content: ""; position: absolute; left: 4px; top: -2px; width: 5px; height: 10px; border: solid #eee; border-width: 0 2px 2px 0; transform: rotate(40deg); }
.workspace { width: 106px; margin-left: auto; }

/* work area */
.work { flex: 1; min-height: 0; display: flex; background: #282828; padding: 1px 1px 0; border-bottom: 2px solid #27313f; }
.strip { height: 11px; flex: none; display: flex; align-items: center; background: linear-gradient(#404040, #353535); margin-bottom: 1px; }
.grip { display: block; width: 20px; height: 4px; flex: none; margin: 3px auto 0; background: repeating-linear-gradient(90deg, #333 0 1px, transparent 1px 2px); }
.tools { width: 37px; display: flex; flex-direction: column; margin-right: 3px; flex: none; }
.left { padding-left: 4px; }
.toolbox { flex: 1; background: #535353; border-top: 1px solid #676767; padding: 0 3px; }
.tools .grip { margin-bottom: 6px; }
.tool { position: relative; display: flex; align-items: center; justify-content: center; width: 31px; height: 26px; padding-right: 1px; }
.tool svg { width: 20px; height: 20px; }
.tool::after { content: ""; position: absolute; right: 4px; bottom: 3px; border-left: 3px solid transparent; border-bottom: 3px solid #ddd; }
.tool.solo::after { display: none; }
.type { font: 20px/26px "Liberation Serif", serif; color: #ccc; }
.hsep { display: block; height: 3px; border: solid #535353; border-width: 1px 0; background: #3a3a3a; }
.toolwrap { position: relative; }
.on { background: #383838; border: 1px solid #2c2c2c; border-radius: 2px; height: 25px; margin-bottom: 1px; }
.flyout { position: absolute; z-index: 2; left: 33px; top: -1px; width: 151px; margin: 0; padding: 1px 1px 5px; list-style: none; background: #5f5f5f; border: 1px solid #3a3a3a; border-width: 1px 1px 1px 0; color: #fff; }
.flyout li { display: flex; align-items: center; height: 19px; padding: 0 8px 0 20px; position: relative; }
.flyout svg { margin-right: 4px; }
.flyout kbd { margin-left: auto; font: 11px/16px "Noto Sans", sans-serif; }
.cur { background: #6b7c93; }
.cur::before { content: ""; position: absolute; left: 7px; width: 4px; height: 4px; background: #fff; }
.mini { display: flex; justify-content: space-between; padding: 4px 1px 0 0; height: 18px; }
.colors { position: relative; height: 31px; }
.colors button { position: absolute; width: 20px; height: 20px; border: 1px solid #333; box-shadow: inset 0 0 0 1px #fff; }
.colors .fg { left: 0; top: 0; background: #ff002a; }
.colors .bg { left: 10px; top: 10px; background: #fff; }
.screen { margin-top: 1px; }

/* document */
.doc { flex: 1; min-width: 0; display: flex; flex-direction: column; margin-right: 2px; }
.tabs { height: 20px; flex: none; display: flex; background: #3a3a3a; border-bottom: 1px solid #2b2b2b; line-height: 19px; }
.tab { padding: 0 4px 0 9px; display: flex; align-items: center; gap: 10px; color: #999; border-right: 1px solid #282828; white-space: nowrap; }
.tab button { width: 12px; line-height: 16px; font-size: 15px; color: #ddd; }
.tab.active { background: #535353; color: #e0e0e0; }
.view { flex: 1; min-height: 0; display: grid; grid-template: 17px 1fr / 17px 1fr 16px; }
.corner { background: #535353; border: 1px dotted #777; border-width: 0 1px 1px 0; }
.ruler { background: #303030; width: 100%; height: 100%; overflow: hidden; font-size: 10px; shape-rendering: crispEdges; }
.ruler line { stroke: #707070; }
.ruler text { fill: #a8a8a8; }
.hr { border-bottom: 1px solid #707070; }
.vr { border-right: 1px solid #707070; }
.vscroll { width: 16px; background: linear-gradient(90deg, #363636, #444); }
.view .vscroll { grid-row: 1 / 3; grid-column: 3; }
.vr { grid-row: 2; grid-column: 1; }
.canvas { background: #282828; padding: 96px 0 0 167px; overflow: hidden; }
.page { width: 1228px; height: 731px; background: #fff; box-shadow: 1px 2px 5px #111; }
.status { height: 17px; flex: none; display: flex; background: #303030; padding-top: 1px; font-size: 12px; color: #fff; }
.status > * { border-right: 1px solid #303030; }
.zoom { width: 48px; padding-left: 9px; }
.share, .play { display: flex; align-items: center; justify-content: center; background: #535353; width: 24px; }
.play { width: 13px; }
.info { width: 171px; text-align: center; background: #535353; }
.hscroll { flex: 1; background: linear-gradient(#363636, #444); }
.sizer { width: 16px; background: #5a5a5a; }

/* icon dock */
.dock { width: 38px; flex: none; display: flex; flex-direction: column; }
.dockbox { background: #535353; border-top: 1px solid #676767; height: 68px; margin-bottom: 1px; }
.dk { display: flex; width: 38px; height: 28px; align-items: center; justify-content: center; padding-left: 3px; }
.dockrest { flex: 1; background: #535353; }

/* panels */
.panels { width: 243px; flex: none; display: flex; flex-direction: column; padding-left: 3px; }
.ends { justify-content: space-between; margin-left: -14px; padding-right: 3px; }
.panel { background: #535353; }
.ptabs { display: flex; height: 17px; background: #393939; border-bottom: 1px solid #626262; font-size: 12px; line-height: 16px; }
.ptabs button { width: 39px; color: #999; border-right: 1px solid #282828; }
.ptabs .active { background: #535353; color: #eee; height: 17px; }
.pm { margin: 4px 4px 0 auto; }
.adjust { height: 130px; flex: none; margin-bottom: 2px; }
.abody { padding: 5px 9px; color: #fff; }
.abody p { margin: 0 0 9px; }
.arow { display: flex; justify-content: center; gap: 8px; padding-right: 30px; margin-bottom: 11px; }
.arow svg { width: 16px; height: 16px; }
.layers { flex: 1; display: flex; flex-direction: column; min-height: 0; }
.lrow { display: flex; align-items: center; height: 28px; flex: none; padding: 0 4px; border-bottom: 2px solid #424242; color: #c4c4c4; white-space: nowrap; }
.lrow + .lrow + .lrow { height: 29px; border-bottom-width: 1px; }
.kind { width: 72px; padding-left: 6px; }
.kind select { padding-left: 4px; }
.dim { border-color: #444; background: #5a5a5a; }
.sel.dim::before { border-bottom-color: #aaa; }
.sel.dim::after { border-top-color: #aaa; }
.ficons { display: flex; gap: 10px; margin-left: 19px; }
.ficons svg, .locks svg { width: 14px; height: 14px; }
.toggle { width: 10px; height: 18px; margin-left: auto; background: #444; border: 1px solid #3a3a3a; border-top: 8px solid #777; }
.blend { width: 112px; }
.pct { display: flex; align-items: center; gap: 6px; margin-left: auto; }
.pct .combo { width: 56px; }
.pct input { background: #505050; color: #777; }
.pct .combo button { background: #5e5e5e; border-color: #444; }
.pct .caret { border-top-color: #aaa; }
.locks { display: flex; align-items: center; gap: 8px; padding-left: 3px; color: #c4c4c4; }
.lk { color: #aaa; }
.list { flex: 1; min-height: 0; display: flex; }
.rows { flex: 1; background: #464646; }
.layer { display: flex; height: 28px; border-bottom: 1px solid #333; }
.eye { width: 31px; display: flex; align-items: center; justify-content: center; background: #535353; border-right: 1px solid #3a3a3a; }
.lname { flex: 1; display: flex; align-items: center; background: #6b7c93; padding: 0 15px 0 3px; color: #fff; }
.thumb { width: 32px; height: 20px; background: #fff; border: 1px solid #111; margin-right: 11px; }
.lk2 { margin-left: auto; color: #e4e4e4; }
.pfoot { height: 19px; flex: none; display: flex; align-items: center; gap: 11px; padding-left: 36px; border-top: 1px solid #333; box-shadow: inset 0 1px #676767; }
.fx { width: 16px; font: italic 16px/16px "Liberation Serif", serif; color: #aaa; }

/* overlays */
.ime { position: absolute; right: 3px; bottom: 5px; width: 60px; height: 25px; display: flex; align-items: center; justify-content: center; gap: 3px; border-radius: 5px; background: #fff; color: #333; }
.mark { position: absolute; right: 8px; bottom: 7px; width: 152px; display: flex; white-space: nowrap; opacity: .8; }
.mark b { display: block; font: bold 21px/22px "Noto Sans CJK SC", sans-serif; color: #1a5ea4; }
.mark span { display: block; font: 16px/20px "Open Sans", sans-serif; color: #2a9a50; }
.notes { position: absolute; left: 0; top: 0; z-index: 3; pointer-events: none; }
.arrow { filter: drop-shadow(2px 2px 2px #0008); }
```
FILE: ruler.js
```js
// Rulers in centimetres at 96 dpi, with five divisions per unit.
const UNIT = 96 / 2.54;
const NS = "http://www.w3.org/2000/svg";

function add(svg, name, attrs, text) {
  const el = document.createElementNS(NS, name);
  for (const key in attrs) el.setAttribute(key, attrs[key]);
  if (text) el.textContent = text;
  svg.append(el);
}

function drawRuler(id, origin, vertical) {
  const svg = document.getElementById(id);
  const box = svg.getBoundingClientRect();
  const length = vertical ? box.height : box.width;
  for (let i = -Math.floor(origin * 5 / UNIT); ; i++) {
    const raw = Math.round(origin + i * UNIT / 5);
    if (raw > length) break;
    const pos = raw + 0.5;
    const major = i % 5 === 0;
    const from = major ? 0 : 13;
    add(svg, "line", vertical
      ? { x1: from, x2: 17, y1: pos, y2: pos }
      : { x1: pos, x2: pos, y1: from, y2: 17 });
    if (!major) continue;
    const label = String(Math.abs(i / 5));
    if (vertical) {
      [...label].forEach((d, n) => add(svg, "text", { x: 3, y: raw + 11 + n * 10 }, d));
    } else {
      add(svg, "text", { x: raw + 4, y: 11 }, label);
    }
  }
}

drawRuler("ruler-h", 167, false);
drawRuler("ruler-v", 96, true);
```
